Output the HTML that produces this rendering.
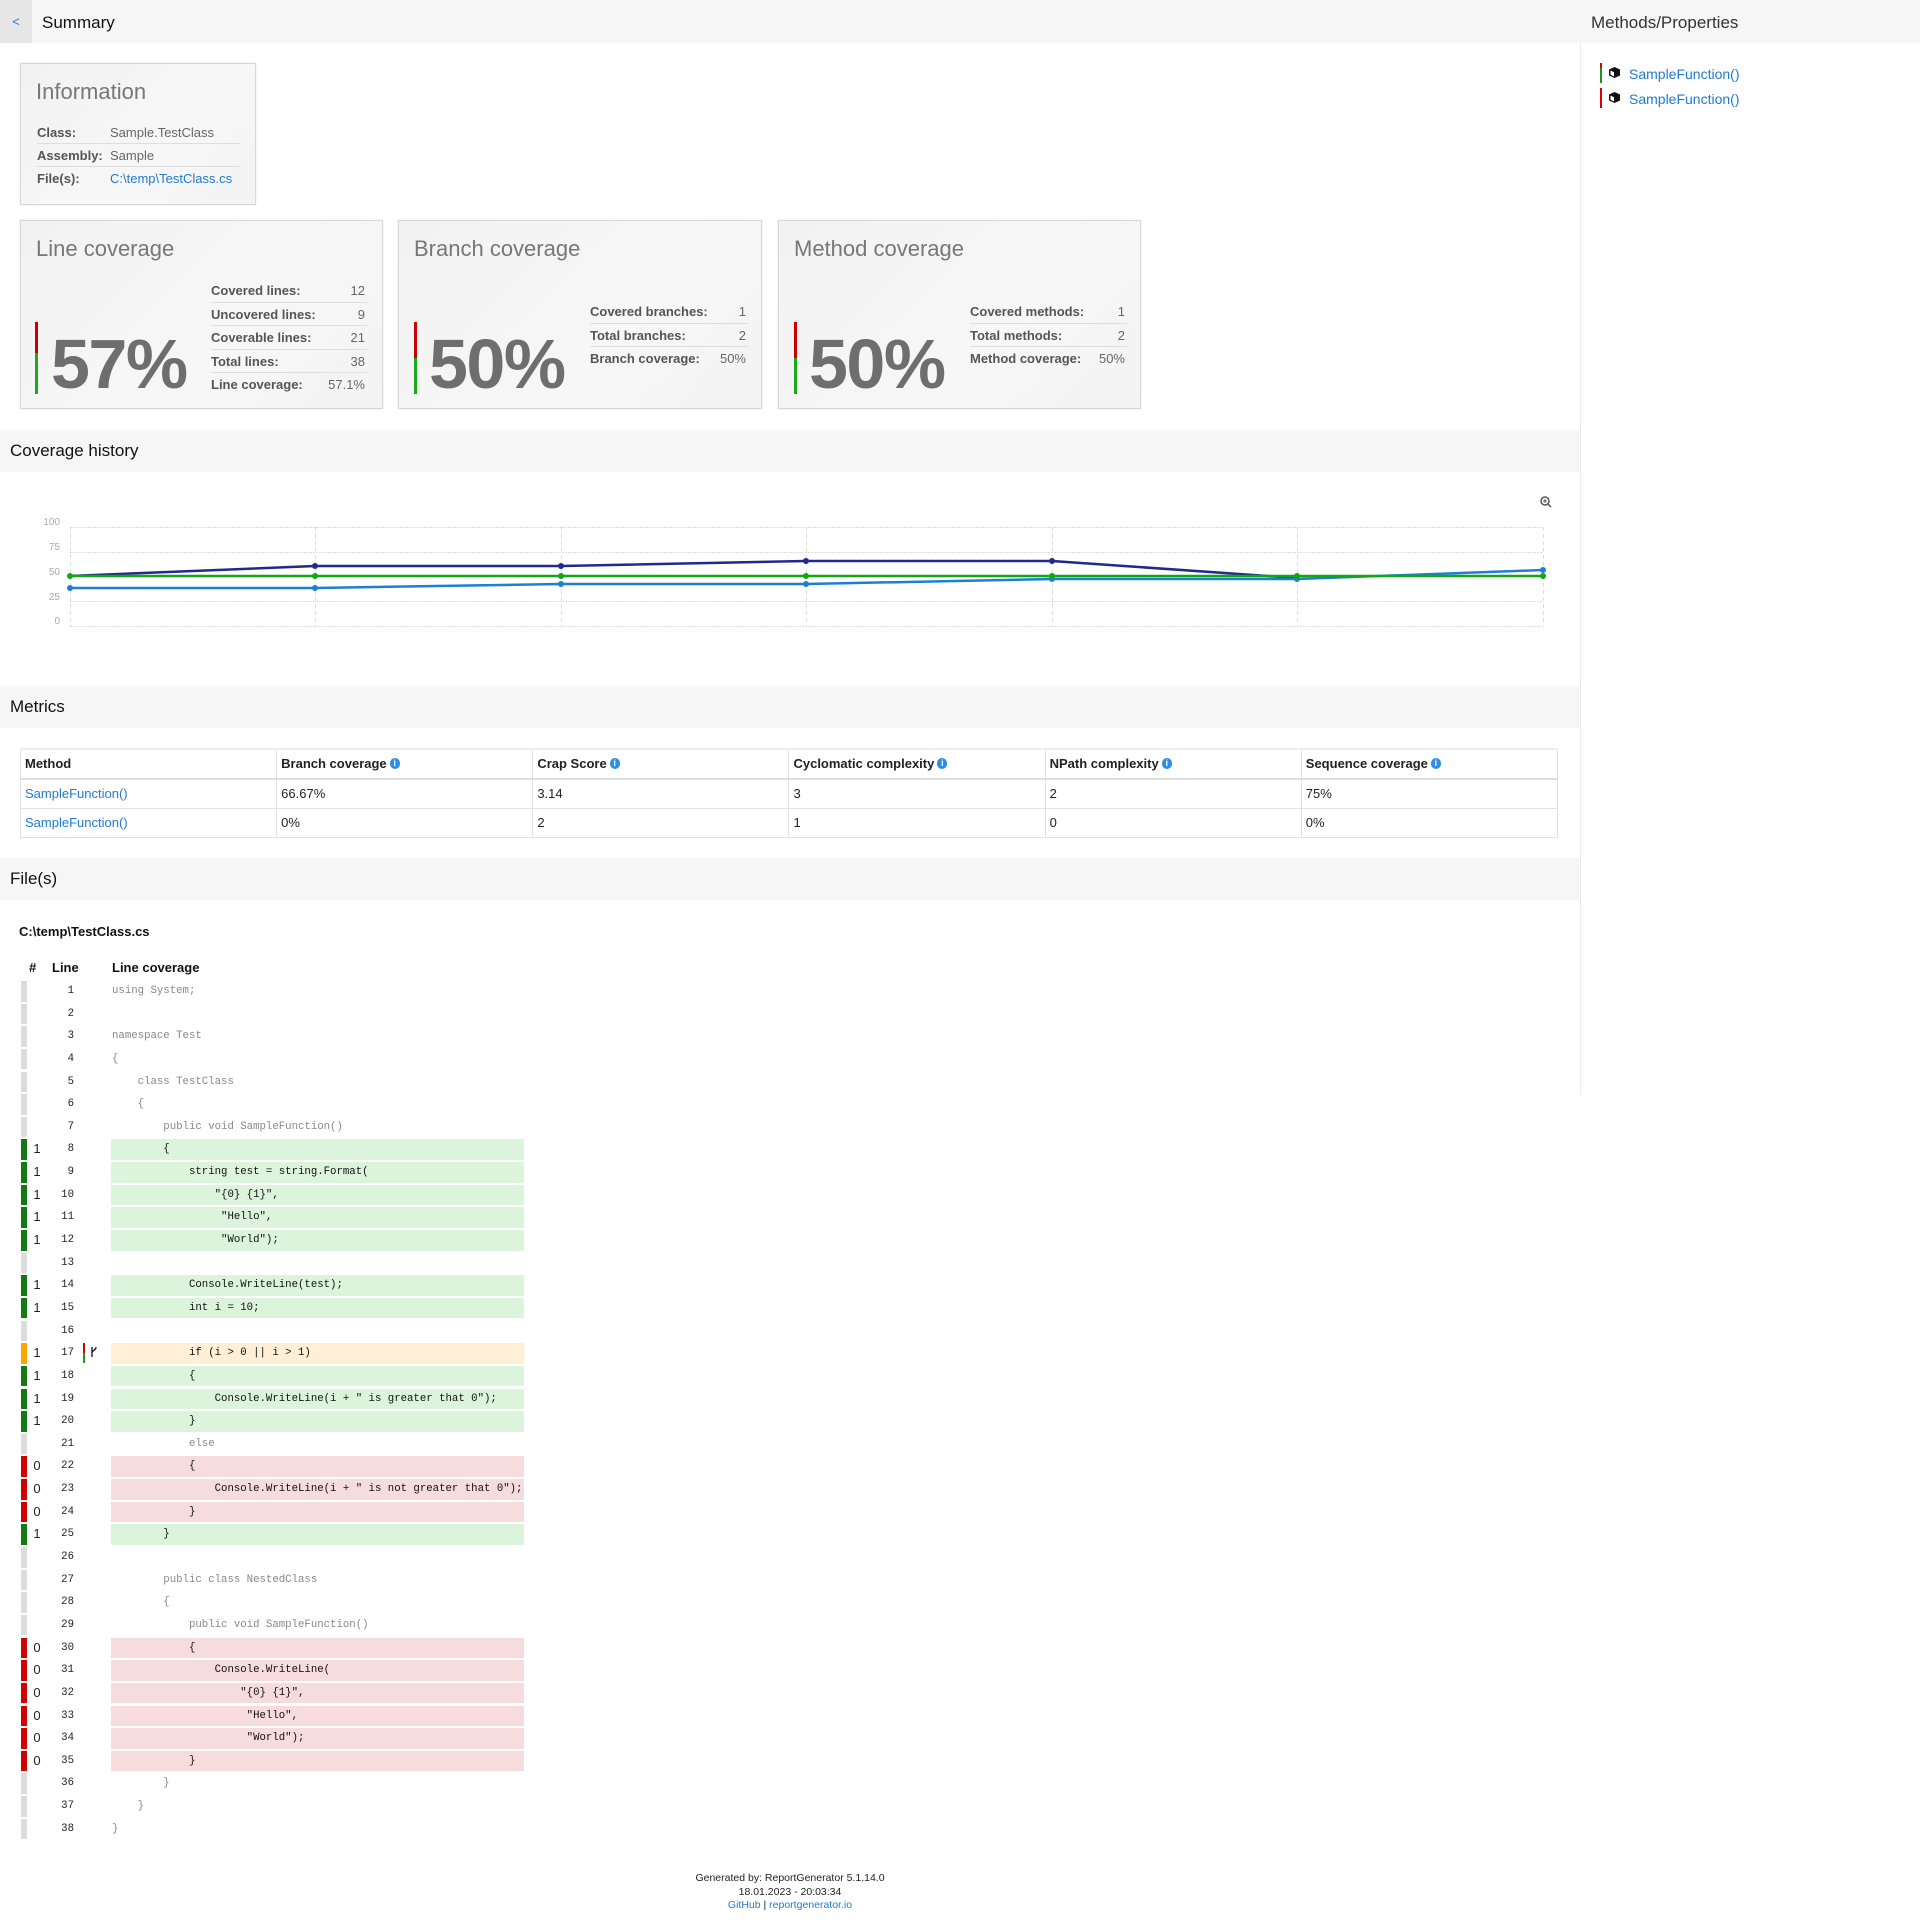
<!DOCTYPE html>
<html><head><meta charset="utf-8">
<style>
*{box-sizing:border-box;margin:0;padding:0}
body{width:1920px;height:1931px;position:relative;font-family:"Liberation Sans",sans-serif;color:#222;background:#fff;overflow:hidden}
.abs{position:absolute}
.bar{position:absolute;left:0;height:43px;background:#f6f6f6}
.sh{position:absolute;left:0;width:1579px;height:42px;background:#f6f6f6;font-size:17px;line-height:42px;padding-left:10px;color:#111}
.card{position:absolute;border:1px solid #d8d8d8;background:linear-gradient(135deg,#f2f2f2,#f7f7f7 60%,#f3f3f3);box-shadow:0 0 2px #e4e4e4}
.ttl{position:absolute;font-size:22px;color:#777;line-height:28px}
.big{position:absolute;font-size:70px;font-weight:bold;color:#6e6e6e;line-height:70px;letter-spacing:-1.5px}
.cb{position:absolute;width:3px}
.st{position:absolute;font-size:13px;line-height:23.5px}
.st div{position:relative;height:23.5px;border-bottom:1px solid #dedede}
.st div:last-child{border-bottom:none}
.st b{color:#555}
.st span{position:absolute;right:2px;top:0;color:#666}
a{color:#1f7ad6;text-decoration:none}
table.m{position:absolute;left:20px;top:748px;width:1538px;border-collapse:collapse;font-size:13px;table-layout:fixed}
table.m td,table.m th{border:1px solid #e2e2e2;height:29.6px;padding:0 4px;text-align:left;color:#222}
table.m th{border-bottom:2px solid #ddd;border-top:2px solid #eee}
.ii{display:inline-block;width:10px;height:11px;border-radius:5px;background:#2a8ee6;color:#fff;font-size:9px;line-height:11px;text-align:center;vertical-align:2px;margin-left:3px;font-weight:bold}
.code{position:absolute;left:0;top:980px;width:600px}
.r{position:relative;height:22.65px}
.r i{position:absolute;left:21px;top:1px;width:6px;height:20.5px;background:#dcdcdc}
.r b{position:absolute;left:31px;width:12px;text-align:center;font-size:13px;font-weight:normal;line-height:22.65px;color:#222}
.r u{position:absolute;left:40px;width:34px;text-align:right;text-decoration:none;font-family:"Liberation Mono",monospace;font-size:10.7px;line-height:22.65px;color:#222}
.r code{position:absolute;left:111px;width:413px;top:1px;height:20.5px;line-height:20.5px;font-family:"Liberation Mono",monospace;font-size:10.7px;white-space:pre;color:#888;padding-left:1px}
.g i{background:#137a13}.g code{background:#dcf4dc;color:#111}
.o i{background:#ffa500}.o code{background:#ffefd6;color:#111}
.x i{background:#d30000}.x code{background:#f6dcdc;color:#111}
</style></head><body>

<div class="bar" style="width:1920px;top:0"></div>
<div class="abs" style="left:0;top:0;width:32px;height:43px;background:#e6e6e6;color:#1f7ad6;font-size:13px;line-height:43px;text-align:center">&lt;</div>
<div class="abs" style="left:42px;top:0;font-size:17px;line-height:45px;color:#111">Summary</div>
<div class="abs" style="left:1591px;top:0;font-size:17px;line-height:45px;color:#333">Methods/Properties</div>
<div class="abs" style="left:1580px;top:43px;width:1px;height:1052px;background:#ececec"></div>

<div class="abs" style="left:1600px;top:63px;width:2px;height:5px;background:#d00"></div>
<div class="abs" style="left:1600px;top:68px;width:2px;height:15px;background:#1a9a1a"></div>
<div class="abs" style="left:1600px;top:88px;width:2px;height:20px;background:#d00"></div>
<svg class="abs" style="left:1608px;top:66px" width="13" height="13" viewBox="0 0 13 13"><path d="M6.5 1 L12 3.5 V9.5 L6.5 12 L1 9.5 V3.5 Z" fill="#111"/><path d="M2.5 4.5 L6 6.2 V10.5 L2.5 8.8Z" fill="#fff"/></svg>
<svg class="abs" style="left:1608px;top:91px" width="13" height="13" viewBox="0 0 13 13"><path d="M6.5 1 L12 3.5 V9.5 L6.5 12 L1 9.5 V3.5 Z" fill="#111"/><path d="M2.5 4.5 L6 6.2 V10.5 L2.5 8.8Z" fill="#fff"/></svg>
<a class="abs" style="left:1629px;top:64px;font-size:14px;line-height:20px">SampleFunction()</a>
<a class="abs" style="left:1629px;top:89px;font-size:14px;line-height:20px">SampleFunction()</a>

<div class="card" style="left:20px;top:63px;width:236px;height:142px"></div>
<div class="ttl" style="left:36px;top:78px">Information</div>
<div class="st" style="left:37px;top:121px;width:204px;line-height:23px">
<div style="height:23px"><b>Class:</b><span style="left:73px;right:auto">Sample.TestClass</span></div>
<div style="height:23px"><b>Assembly:</b><span style="left:73px;right:auto">Sample</span></div>
<div style="height:23px"><b>File(s):</b><span style="left:73px;right:auto"><a>C:\temp\TestClass.cs</a></span></div>
</div>

<div class="card" style="left:20px;top:220px;width:363px;height:189px"></div>
<div class="ttl" style="left:36px;top:235px">Line coverage</div>
<div class="cb" style="left:35px;top:322px;height:31px;background:#c00"></div>
<div class="cb" style="left:35px;top:353px;height:41px;background:#1aaa1a"></div>
<div class="big" style="left:51px;top:329px">57%</div>
<div class="st" style="left:211px;top:279px;width:156px">
<div><b>Covered lines:</b><span>12</span></div>
<div><b>Uncovered lines:</b><span>9</span></div>
<div><b>Coverable lines:</b><span>21</span></div>
<div><b>Total lines:</b><span>38</span></div>
<div><b>Line coverage:</b><span>57.1%</span></div>
</div>

<div class="card" style="left:398px;top:220px;width:364px;height:189px"></div>
<div class="ttl" style="left:414px;top:235px">Branch coverage</div>
<div class="cb" style="left:414px;top:322px;height:36px;background:#c00"></div>
<div class="cb" style="left:414px;top:358px;height:36px;background:#1aaa1a"></div>
<div class="big" style="left:429px;top:329px">50%</div>
<div class="st" style="left:590px;top:300px;width:158px">
<div><b>Covered branches:</b><span>1</span></div>
<div><b>Total branches:</b><span>2</span></div>
<div><b>Branch coverage:</b><span>50%</span></div>
</div>

<div class="card" style="left:778px;top:220px;width:363px;height:189px"></div>
<div class="ttl" style="left:794px;top:235px">Method coverage</div>
<div class="cb" style="left:794px;top:322px;height:36px;background:#c00"></div>
<div class="cb" style="left:794px;top:358px;height:36px;background:#1aaa1a"></div>
<div class="big" style="left:809px;top:329px">50%</div>
<div class="st" style="left:970px;top:300px;width:157px">
<div><b>Covered methods:</b><span>1</span></div>
<div><b>Total methods:</b><span>2</span></div>
<div><b>Method coverage:</b><span>50%</span></div>
</div>

<div class="sh" style="top:430px">Coverage history</div>

<svg class="abs" style="left:0;top:0" width="1579" height="700">
<g stroke="#ddd" stroke-width="1" stroke-dasharray="2,1" fill="none">
<line x1="70" y1="527.5" x2="1543" y2="527.5"/><line x1="70" y1="552.5" x2="1543" y2="552.5"/><line x1="70" y1="576.5" x2="1543" y2="576.5"/><line x1="70" y1="601.5" x2="1543" y2="601.5"/><line x1="70" y1="626.5" x2="1543" y2="626.5"/>
</g>
<g stroke="#ddd" stroke-width="1" stroke-dasharray="4,3">
<line x1="70.5" y1="527" x2="70.5" y2="626"/><line x1="315.5" y1="527" x2="315.5" y2="626"/><line x1="561.5" y1="527" x2="561.5" y2="626"/><line x1="806.5" y1="527" x2="806.5" y2="626"/><line x1="1052.5" y1="527" x2="1052.5" y2="626"/><line x1="1297.5" y1="527" x2="1297.5" y2="626"/><line x1="1543.5" y1="527" x2="1543.5" y2="626"/>
</g>
<g font-family="Liberation Sans,sans-serif" font-size="10" fill="#aaa" text-anchor="end">
<text x="60" y="525">100</text><text x="60" y="550">75</text><text x="60" y="575">50</text><text x="60" y="600">25</text><text x="60" y="624">0</text>
</g>
<polyline points="70,576 315,566 561,566 806,561 1052,561 1297,578" fill="none" stroke="#22288e" stroke-width="2.5"/>
<polyline points="70,588 315,588 561,584 806,584 1052,579 1297,579 1543,570" fill="none" stroke="#1b7fd6" stroke-width="2.5"/>
<polyline points="70,576 1543,576" fill="none" stroke="#12a612" stroke-width="2.5"/>
<g fill="#22288e"><circle cx="315" cy="566" r="3"/><circle cx="561" cy="566" r="3"/><circle cx="806" cy="561" r="3"/><circle cx="1052" cy="561" r="3"/></g>
<g fill="#1b7fd6"><circle cx="70" cy="588" r="3"/><circle cx="315" cy="588" r="3"/><circle cx="561" cy="584" r="3"/><circle cx="806" cy="584" r="3"/><circle cx="1052" cy="579" r="3"/><circle cx="1297" cy="579" r="3"/><circle cx="1543" cy="570" r="3"/></g>
<g fill="#12a612"><circle cx="70" cy="576" r="3"/><circle cx="315" cy="576" r="3"/><circle cx="561" cy="576" r="3"/><circle cx="806" cy="576" r="3"/><circle cx="1052" cy="576" r="3"/><circle cx="1297" cy="576" r="3"/><circle cx="1543" cy="576" r="3"/></g>
<g stroke="#555" fill="none" stroke-width="1.5"><circle cx="1545" cy="501" r="4"/><line x1="1548" y1="504" x2="1551" y2="507"/><line x1="1543" y1="501" x2="1547" y2="501" stroke-width="1"/><line x1="1545" y1="499" x2="1545" y2="503" stroke-width="1"/></g>
</svg>

<div class="sh" style="top:686px">Metrics</div>
<table class="m">
<tr><th>Method</th><th>Branch coverage<span class="ii">i</span></th><th>Crap Score<span class="ii">i</span></th><th>Cyclomatic complexity<span class="ii">i</span></th><th>NPath complexity<span class="ii">i</span></th><th>Sequence coverage<span class="ii">i</span></th></tr>
<tr><td><a>SampleFunction()</a></td><td>66.67%</td><td>3.14</td><td>3</td><td>2</td><td>75%</td></tr>
<tr><td><a>SampleFunction()</a></td><td>0%</td><td>2</td><td>1</td><td>0</td><td>0%</td></tr>
</table>

<div class="sh" style="top:858px">File(s)</div>
<div class="abs" style="left:19px;top:923px;font-size:13px;font-weight:bold;line-height:18px;color:#111">C:\temp\TestClass.cs</div>
<div class="abs" style="left:29px;top:959px;font-size:13px;font-weight:bold;line-height:18px;color:#111">#</div>
<div class="abs" style="left:52px;top:959px;font-size:13px;font-weight:bold;line-height:18px;color:#111">Line</div>
<div class="abs" style="left:112px;top:959px;font-size:13px;font-weight:bold;line-height:18px;color:#111">Line coverage</div>

<div class="code">
<div class="r"><i></i><u>1</u><code>using System;</code></div>
<div class="r"><i></i><u>2</u><code></code></div>
<div class="r"><i></i><u>3</u><code>namespace Test</code></div>
<div class="r"><i></i><u>4</u><code>{</code></div>
<div class="r"><i></i><u>5</u><code>    class TestClass</code></div>
<div class="r"><i></i><u>6</u><code>    {</code></div>
<div class="r"><i></i><u>7</u><code>        public void SampleFunction()</code></div>
<div class="r g"><i></i><b>1</b><u>8</u><code>        {</code></div>
<div class="r g"><i></i><b>1</b><u>9</u><code>            string test = string.Format(</code></div>
<div class="r g"><i></i><b>1</b><u>10</u><code>                "{0} {1}",</code></div>
<div class="r g"><i></i><b>1</b><u>11</u><code>                 "Hello",</code></div>
<div class="r g"><i></i><b>1</b><u>12</u><code>                 "World");</code></div>
<div class="r"><i></i><u>13</u><code></code></div>
<div class="r g"><i></i><b>1</b><u>14</u><code>            Console.WriteLine(test);</code></div>
<div class="r g"><i></i><b>1</b><u>15</u><code>            int i = 10;</code></div>
<div class="r"><i></i><u>16</u><code></code></div>
<div class="r o"><i></i><b>1</b><u>17</u><span class="abs" style="left:83px;top:1px;width:2px;height:10px;background:#d00"></span><span class="abs" style="left:83px;top:11px;width:2px;height:10px;background:#1a9a1a"></span><svg class="abs" style="left:90px;top:4px" width="8" height="12" viewBox="0 0 8 12"><path d="M2 1 V11 M2 7 C2 4 6 5 6 1" stroke="#222" stroke-width="1.4" fill="none"/></svg><code>            if (i &gt; 0 || i &gt; 1)</code></div>
<div class="r g"><i></i><b>1</b><u>18</u><code>            {</code></div>
<div class="r g"><i></i><b>1</b><u>19</u><code>                Console.WriteLine(i + " is greater that 0");</code></div>
<div class="r g"><i></i><b>1</b><u>20</u><code>            }</code></div>
<div class="r"><i></i><u>21</u><code>            else</code></div>
<div class="r x"><i></i><b>0</b><u>22</u><code>            {</code></div>
<div class="r x"><i></i><b>0</b><u>23</u><code>                Console.WriteLine(i + " is not greater that 0");</code></div>
<div class="r x"><i></i><b>0</b><u>24</u><code>            }</code></div>
<div class="r g"><i></i><b>1</b><u>25</u><code>        }</code></div>
<div class="r"><i></i><u>26</u><code></code></div>
<div class="r"><i></i><u>27</u><code>        public class NestedClass</code></div>
<div class="r"><i></i><u>28</u><code>        {</code></div>
<div class="r"><i></i><u>29</u><code>            public void SampleFunction()</code></div>
<div class="r x"><i></i><b>0</b><u>30</u><code>            {</code></div>
<div class="r x"><i></i><b>0</b><u>31</u><code>                Console.WriteLine(</code></div>
<div class="r x"><i></i><b>0</b><u>32</u><code>                    "{0} {1}",</code></div>
<div class="r x"><i></i><b>0</b><u>33</u><code>                     "Hello",</code></div>
<div class="r x"><i></i><b>0</b><u>34</u><code>                     "World");</code></div>
<div class="r x"><i></i><b>0</b><u>35</u><code>            }</code></div>
<div class="r"><i></i><u>36</u><code>        }</code></div>
<div class="r"><i></i><u>37</u><code>    }</code></div>
<div class="r"><i></i><u>38</u><code>}</code></div>
</div>

<div class="abs" style="left:590px;top:1872px;width:400px;text-align:center;font-size:10.5px;line-height:13.5px;color:#222">Generated by: ReportGenerator 5.1.14.0<br>18.01.2023 - 20:03:34<br><a>GitHub</a> | <a>reportgenerator.io</a></div>
</body></html>
